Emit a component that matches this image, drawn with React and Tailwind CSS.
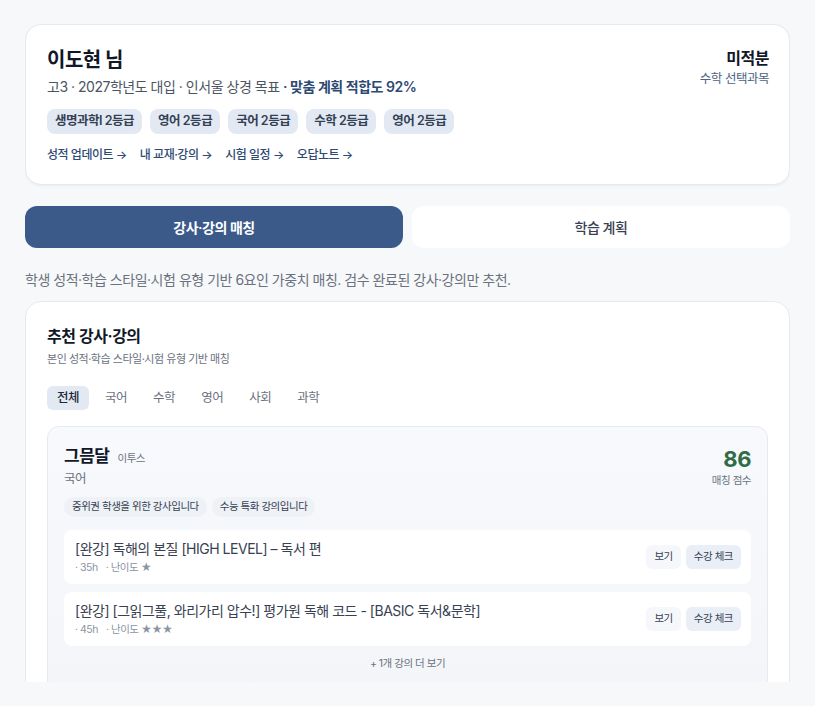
import React from "react";

const font = {
  fontFamily: "Inter, 'Noto Sans CJK KR', 'Noto Sans', sans-serif",
  letterSpacing: "-0.03em",
};

const grades = ["생명과학I 2등급", "영어 2등급", "국어 2등급", "수학 2등급", "영어 2등급"];
const links = ["성적 업데이트", "내 교재·강의", "시험 일정", "오답노트"];
const filters = ["전체", "국어", "수학", "영어", "사회", "과학"];
const lectures = [
  { title: "[완강] 독해의 본질 [HIGH LEVEL] – 독서 편", hours: "35h", level: "★" },
  { title: "[완강] [그읽그풀, 와리가리 압수!] 평가원 독해 코드 - [BASIC 독서&문학]", hours: "45h", level: "★★★" },
];

function LectureRow({ lecture }) {
  return (
    <div className="flex h-[54px] items-center justify-between rounded-lg bg-white pl-[11px] pr-[10px]">
      <div className="flex flex-col">
        <div className="text-[14px] leading-[20px] text-[#374151]">{lecture.title}</div>
        <div className="mt-[2px] flex gap-[8px] text-[10.5px] leading-[14px] text-[#8a94a3]">
          <span>· {lecture.hours}</span>
          <span>· 난이도 {lecture.level}</span>
        </div>
      </div>
      <div className="flex gap-[5px] text-[10.5px] text-[#374151]">
        <button className="h-[24px] rounded-md bg-[#f5f7fa] px-[8px]">보기</button>
        <button className="h-[24px] rounded-md bg-[#e9eef7] px-[8px]">수강 체크</button>
      </div>
    </div>
  );
}

export default function App() {
  return (
    <div style={font} className="h-[706px] bg-[#f7f8fa] px-[25px] py-[24px]">
      <div className="flex h-full flex-col overflow-hidden">
        {/* Student profile */}
        <section className="flex shrink-0 justify-between rounded-2xl border border-[#e6e9ef] bg-white pb-[20px] pl-[21px] pr-[20px] pt-[20px] shadow-[0_1px_3px_rgba(15,23,42,0.05)]">
          <div>
            <h1 className="text-[20px] font-bold leading-[30px] text-[#111827]">이도현 님</h1>
            <p className="mt-[2px] text-[14px] leading-[20px] text-[#4b5563]">
              고3 · 2027학년도 대입 · 인서울 상경 목표{" "}
              <span className="font-semibold text-[#2d4a73]">· 맞춤 계획 적합도 92%</span>
            </p>
            <div className="mt-[12px] flex gap-[8px]">
              {grades.map((g, i) => (
                <span
                  key={i}
                  className="flex h-[25px] items-center rounded-lg bg-[#e3e9f2] px-[8px] text-[12.5px] font-semibold text-[#334155]"
                >
                  {g}
                </span>
              ))}
            </div>
            <div className="mt-[12px] flex gap-[13px] text-[12px] font-medium leading-[18px] text-[#2d4a73]">
              {links.map((l) => (
                <span key={l}>{l} →</span>
              ))}
            </div>
          </div>
          <div className="pt-[1px] text-right">
            <div className="text-[16px] font-bold leading-[24px] text-[#111827]">미적분</div>
            <div className="text-[12.5px] leading-[18px] text-[#4b6585]">수학 선택과목</div>
          </div>
        </section>

        {/* Tabs */}
        <div className="mt-[21px] grid shrink-0 grid-cols-2 gap-[9px]">
          <button className="h-[42px] rounded-xl bg-[#3b5a8a] text-[14px] font-semibold text-white">강사·강의 매칭</button>
          <button className="h-[42px] rounded-xl bg-white text-[14px] font-medium text-[#374151]">학습 계획</button>
        </div>

        <p className="mt-[22px] shrink-0 text-[14px] leading-[20px] text-[#6b7280]">
          학생 성적·학습 스타일·시험 유형 기반 6요인 가중치 매칭. 검수 완료된 강사·강의만 추천.
        </p>

        {/* Recommendations */}
        <section className="mt-[11px] shrink-0 rounded-2xl border border-[#e6e9ef] bg-white px-[21px] pb-[21px] pt-[22px]">
          <h2 className="text-[16px] font-semibold leading-[24px] text-[#111827]">추천 강사·강의</h2>
          <p className="mt-[3px] text-[11px] leading-[16px] text-[#6b7280]">본인 성적·학습 스타일·시험 유형 기반 매칭</p>
          <div className="mt-[19px] flex gap-[6px]">
            {filters.map((f, i) => (
              <span
                key={f}
                className={
                  i === 0
                    ? "flex h-[24px] items-center rounded-md bg-[#e3e9f2] px-[10px] text-[12.5px] font-medium text-[#1f2937]"
                    : "flex h-[24px] items-center px-[10px] text-[12.5px] text-[#6b7280]"
                }
              >
                {f}
              </span>
            ))}
          </div>

          <div className="mt-[16px] rounded-xl border border-[#e5e9f0] bg-gradient-to-b from-[#f7f9fc] to-[#f3f5f8] px-[16px] pb-[20px] pt-[17px]">
            <div className="flex justify-between">
              <div>
                <div className="flex items-baseline gap-[8px]">
                  <span className="text-[17px] font-semibold leading-[24px] text-[#111827]">그믐달</span>
                  <span className="text-[10.5px] text-[#6b7280]">이투스</span>
                </div>
                <div className="mt-[2px] text-[12.5px] leading-[18px] text-[#6b7280]">국어</div>
                <div className="mt-[9px] flex gap-[5px]">
                  <span className="flex h-[20px] items-center rounded-full bg-[#eef1f6] px-[8px] text-[10.5px] text-[#374151]">
                    중위권 학생을 위한 강사입니다
                  </span>
                  <span className="flex h-[20px] items-center rounded-full bg-[#eef1f6] px-[8px] text-[10.5px] text-[#374151]">
                    수능 특화 강의입니다
                  </span>
                </div>
              </div>
              <div className="text-right">
                <div className="text-[22px] font-bold leading-[30px] text-[#2f6b45]">86</div>
                <div className="text-[10.5px] leading-[14px] text-[#6b7280]">매칭 점수</div>
              </div>
            </div>

            <div className="mt-[13px] flex flex-col gap-[8px]">
              {lectures.map((l, i) => (
                <LectureRow key={i} lecture={l} />
              ))}
            </div>
            <div className="mt-[11px] text-center text-[10.5px] leading-[14px] text-[#6b7280]">+ 1개 강의 더 보기</div>
          </div>
        </section>
      </div>
    </div>
  );
}
